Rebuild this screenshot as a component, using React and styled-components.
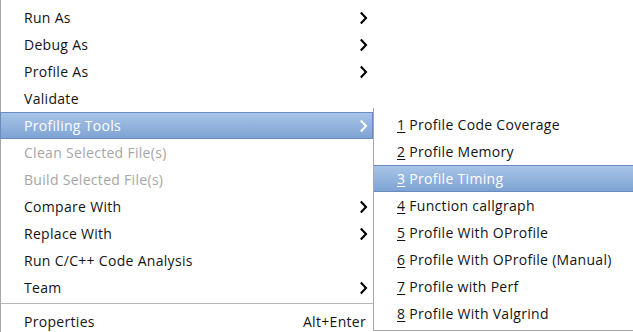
import React from 'react';
import styled, { createGlobalStyle } from 'styled-components';

const Global = createGlobalStyle`
  html, body { margin: 0; padding: 0; background: #ffffff; overflow: hidden; }
  body { font-family: "Open Sans", "DejaVu Sans", sans-serif; }
`;

const mainItems = [
  { label: 'Run As', sub: true },
  { label: 'Debug As', sub: true },
  { label: 'Profile As', sub: true },
  { label: 'Validate' },
  { label: 'Profiling Tools', sub: true, active: true },
  { label: 'Clean Selected File(s)', disabled: true },
  { label: 'Build Selected File(s)', disabled: true },
  { label: 'Compare With', sub: true },
  { label: 'Replace With', sub: true },
  { label: 'Run C/C++ Code Analysis' },
  { label: 'Team', sub: true },
  { separator: true },
  { label: 'Properties', accel: 'Alt+Enter' },
];

const subItems = [
  { key: '1', label: 'Profile Code Coverage' },
  { key: '2', label: 'Profile Memory' },
  { key: '3', label: 'Profile Timing', active: true },
  { key: '4', label: 'Function callgraph' },
  { key: '5', label: 'Profile With OProfile' },
  { key: '6', label: 'Profile With OProfile (Manual)' },
  { key: '7', label: 'Profile with Perf' },
  { key: '8', label: 'Profile With Valgrind' },
];

const Chevron = ({ light }) => (
  <svg width="9" height="14" viewBox="0 0 9 14">
    <path d="M1.8 1.5 L7 7 L1.8 12.5" fill="none"
      stroke={light ? '#ffffff' : '#000000'} strokeWidth="2.1" />
  </svg>
);

const App = () => (
  <Screen>
    <Global />
    <MainMenu>
      {mainItems.map((item, i) =>
        item.separator ? (
          <Separator key={i} />
        ) : (
          <Row key={i} active={item.active} disabled={item.disabled}>
            <Label>{item.label}</Label>
            {item.sub && <Chevron light={item.active} />}
            {item.accel && <Accel>{item.accel}</Accel>}
          </Row>
        )
      )}
    </MainMenu>
    <SubMenu>
      {subItems.map((item) => (
        <SubRow key={item.key} active={item.active}>
          <Mnemonic>{item.key}</Mnemonic>
          <SubLabel>{item.label}</SubLabel>
        </SubRow>
      ))}
    </SubMenu>
  </Screen>
);

const Screen = styled.div`
  position: relative;
  width: 633px;
  height: 332px;
  overflow: hidden;
  background: #ffffff;
`;

const MainMenu = styled.div`
  width: 373px;
  border-left: 1px solid #a8a8a8;
  padding-top: 4px;
  box-sizing: border-box;
`;

const Row = styled.div`
  display: flex;
  align-items: center;
  justify-content: space-between;
  height: 27px;
  box-sizing: border-box;
  padding: 0 4px 0 23px;
  width: 373px;
  margin-left: -1px;
  font-size: 14px;
  letter-spacing: 0.3px;
  color: ${(p) => (p.disabled ? '#a6a6a6' : p.active ? '#ffffff' : '#141414')};
  background: ${(p) => (p.active ? 'linear-gradient(#a8c4e7, #7ea3d3)' : 'transparent')};
  border: 1px solid ${(p) => (p.active ? '#6a8cbc' : 'transparent')};
`;

const Label = styled.span`
  white-space: nowrap;
`;

const Accel = styled.span`
  white-space: nowrap;
  margin-right: 2px;
`;

const Separator = styled.div`
  height: 1px;
  background: #b8b8b8;
  margin: 2px 0 4px 0;
`;

/* submenu overlays the parent menu's right side */
const SubMenu = styled.div`
  position: absolute;
  left: 373px;
  top: 108px;
  width: 280px;
  height: 223px;
  box-sizing: border-box;
  padding-top: 3px;
  background: #ffffff;
  border-left: 1px solid #a8a8a8;
  border-bottom: 1px solid #a8a8a8;
`;

const SubRow = styled.div`
  display: flex;
  align-items: center;
  gap: 4px;
  height: 27px;
  box-sizing: border-box;
  padding-left: 23px;
  font-size: 14px;
  letter-spacing: 0.3px;
  white-space: nowrap;
  color: ${(p) => (p.active ? '#ffffff' : '#141414')};
  background: ${(p) => (p.active ? 'linear-gradient(#a8c4e7, #7ea3d3)' : 'transparent')};
  border-top: 1px solid ${(p) => (p.active ? '#6a8cbc' : 'transparent')};
  border-bottom: 1px solid ${(p) => (p.active ? '#6a8cbc' : 'transparent')};
`;

const Mnemonic = styled.span`
  text-decoration: underline;
  text-underline-offset: 2px;
`;

const SubLabel = styled.span``;

export default App;
